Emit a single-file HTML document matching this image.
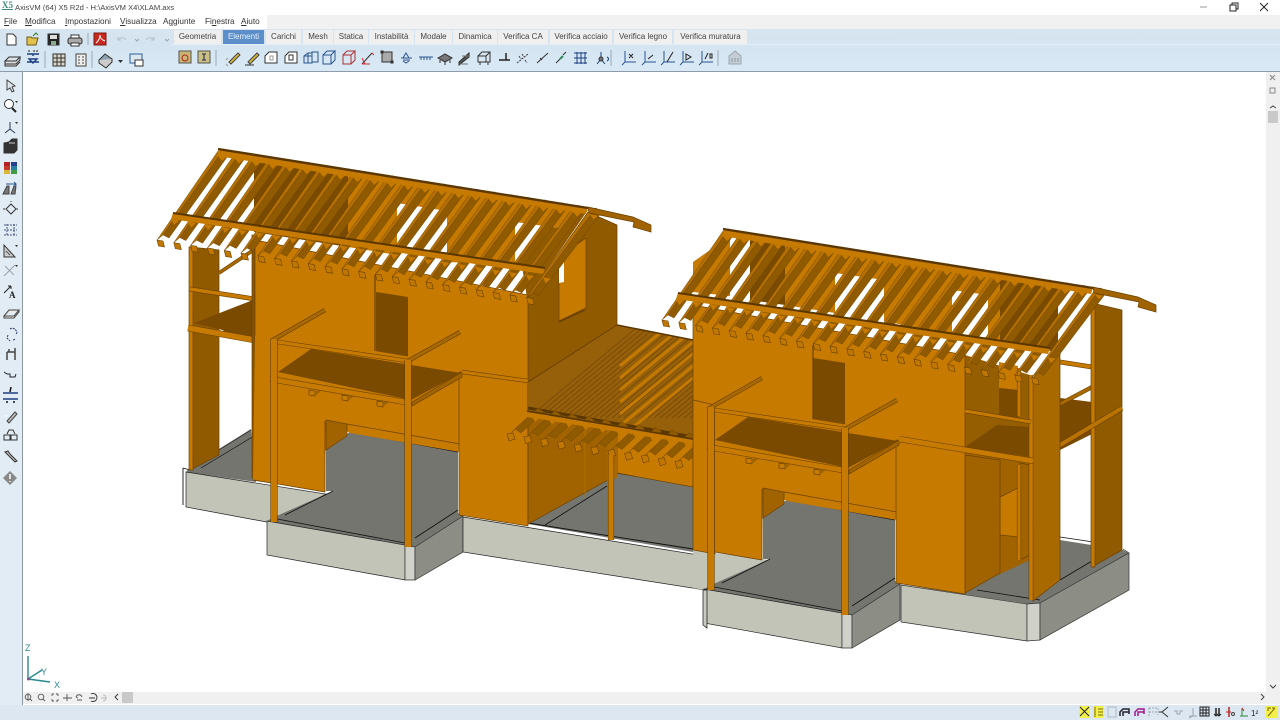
<!DOCTYPE html>
<html lang="it"><head><meta charset="utf-8"><title>AxisVM</title>
<style>
html,body{margin:0;padding:0;width:1280px;height:720px;overflow:hidden;background:#fff;font-family:"Liberation Sans",sans-serif;color:#333}
div{position:absolute}
.t{font-size:8.2px;line-height:14px;white-space:nowrap}
.tab{position:absolute;top:30px;height:14px;background:#efefef;font-size:8px;line-height:14px;text-align:center;color:#444;white-space:nowrap}
.on{background:#5c8fc9;color:#e8f0fa}
u{text-decoration:underline}
svg{position:absolute;left:0;top:0}
</style></head><body>
<div style="left:0;top:0;width:1280px;height:14px;background:#fff"></div>
<div style="left:267px;top:15px;width:1013px;height:14px;background:#f1f1f1"></div>
<div class="t" style="left:15px;top:1px;color:#444;font-size:7.6px">AxisVM (64) X5 R2d - H:\AxisVM X4\XLAM.axs</div>
<div style="left:2px;top:0;font:bold 9px/10px 'Liberation Serif',serif;color:#3d8a78;text-decoration:underline">X5</div>
<div class="t" style="left:4px;top:15px"><u>F</u>ile</div>
<div class="t" style="left:25px;top:15px"><u>M</u>odifica</div>
<div class="t" style="left:65px;top:15px"><u>I</u>mpostazioni</div>
<div class="t" style="left:120px;top:15px"><u>V</u>isualizza</div>
<div class="t" style="left:163px;top:15px">A<u>g</u>giunte</div>
<div class="t" style="left:205px;top:15px">Fi<u>n</u>estra</div>
<div class="t" style="left:241px;top:15px"><u>A</u>iuto</div>
<div style="left:0;top:29px;width:1280px;height:42px;background:linear-gradient(#d8e5f0,#d4e4f0 40%,#d9e9f5 100%)"></div>
<div style="left:0;top:71px;width:1280px;height:1px;background:#8e9ba8"></div>
<div style="left:172px;top:44px;width:1108px;height:1px;background:#e6eff6"></div>
<div style="left:0;top:72px;width:22px;height:633px;background:#e2ecf5"></div>
<div style="left:22px;top:72px;width:1px;height:633px;background:#8f99a3"></div>
<div style="left:23px;top:692px;width:1243px;height:12px;background:#f0f0f0"></div>
<div style="left:1266px;top:72px;width:14px;height:632px;background:#f0f0f0"></div>
<div style="left:122px;top:692px;width:11px;height:11px;background:#c9c9c9"></div>
<div style="left:1268px;top:111px;width:10px;height:12px;background:#c9c9c9"></div>
<div style="left:0;top:705px;width:1280px;height:15px;background:#dce7f1"></div>
<div style="left:1079px;top:706px;width:11px;height:12px;background:#f4f04a"></div>
<div style="left:1093px;top:706px;width:11px;height:12px;background:#f4f04a"></div>
<div style="left:1266px;top:706px;width:12px;height:12px;background:#f4f04a"></div>
<div class="tab" style="left:174px;width:47px">Geometria</div>
<div class="tab on" style="left:223px;width:41px">Elementi</div>
<div class="tab" style="left:266px;width:35px">Carichi</div>
<div class="tab" style="left:303px;width:30px">Mesh</div>
<div class="tab" style="left:334px;width:34px">Statica</div>
<div class="tab" style="left:369px;width:45px">Instabilità</div>
<div class="tab" style="left:415px;width:37px">Modale</div>
<div class="tab" style="left:453px;width:44px">Dinamica</div>
<div class="tab" style="left:498px;width:50px">Verifica CA</div>
<div class="tab" style="left:550px;width:62px">Verifica acciaio</div>
<div class="tab" style="left:614px;width:58px">Verifica legno</div>
<div class="tab" style="left:674px;width:73px">Verifica muratura</div>

<svg id="m" width="1280" height="720" viewBox="0 0 1280 720"></svg>

<svg width="1280" height="720" viewBox="0 0 1280 720" fill="none" stroke="#333" stroke-width="1">
<!-- window controls -->
<path d="M1200 7h7" stroke="#999"/><path d="M1230 5h6v6h-6zM1232 5v-2h6v6h-2" stroke="#222"/><path d="M1260 3l8 8M1268 3l-8 8" stroke="#222"/>
<!-- toolbar row 1 -->
<path d="M7 34h6l3 3v8H7z" fill="#fff"/>
<path d="M27 37h4l1 1h6l-2 7H27z" fill="#e2c24a" stroke="#6b5a1c"/><path d="M33 36l3-3 2 2" stroke="#2a7d2a"/>
<rect x="48" y="34" width="11" height="11" fill="#222"/><rect x="50" y="35" width="7" height="4" fill="#ddd" stroke="none"/><rect x="51" y="41" width="5" height="4" fill="#8a8" stroke="none"/>
<path d="M71 35h8v3h-8z" fill="#fff"/><rect x="68" y="38" width="14" height="6" rx="2" fill="#aaa"/><path d="M71 43h8v3h-8z" fill="#fff"/>
<path d="M88 33v12" stroke="#9aa8b4"/>
<rect x="94" y="33" width="12" height="12" fill="#c8281e" stroke="#7a1a14"/><path d="M96 43c3-2 4-6 4-8 0 3 2 5 5 6" stroke="#fff"/>
<path d="M118 40c2-3 6-3 8 0M118 37v3h3M146 40c2-3 6-3 8 0M154 37v3h-3" stroke="#b5bfc9"/><path d="M135 39l2 2 2-2M165 39l2 2 2-2" stroke="#9aa6b2"/>
<!-- toolbar row 2 -->
<path d="M5 61l4-4h11l-4 4zM5 61v3h11l4-4v-3M5 64v2h11l4-4" fill="#ddd"/>
<path d="M27 54h12M27 62h12M33 54v2M29 59h8l-4 4z" stroke="#1d3f80" stroke-width="1.4"/><path d="M28 51h2M33 51h2M36 51h2" stroke="#222"/>
<path d="M45 51v17M92 51v17" stroke="#9aa8b4"/>
<rect x="53" y="54" width="12" height="12" fill="#d9d6c4" stroke="#333"/><path d="M53 58h12M53 62h12M57 54v12M61 54v12" stroke="#333"/>
<rect x="76" y="54" width="10" height="12" fill="#eee" stroke="#444"/><path d="M78 57h2M78 60h2M78 63h2M82 57h2M82 60h2M82 63h2" stroke="#444"/>
<path d="M99 60l6-6 7 5-6 7z" fill="#8ba0b0" stroke="#333"/><path d="M99 60v3l7 5 6-6v-3" fill="#ccc" stroke="#333"/><path d="M118 60h5l-2.5 3z" fill="#333" stroke="none"/>
<rect x="130" y="54" width="12" height="9" fill="#dde7f0" stroke="#2d5f96"/><rect x="135" y="60" width="8" height="6" fill="#fff" stroke="#333"/>
<!-- group -->
<rect x="179" y="51" width="12" height="12" fill="#c9b673" stroke="#555"/><circle cx="185" cy="58" r="3" stroke="#b02020"/>
<rect x="198" y="51" width="12" height="12" fill="#c9c083" stroke="#555"/><path d="M204 54v6M202 54h4M202 60h4" stroke="#224"/>
<path d="M216 50v16" stroke="#9aa8b4"/>
<path d="M229 62l9-9 2 2-9 9z" fill="#d9b93a" stroke="#444"/><path d="M226 64l2 2M226 60l2-2" stroke="#999"/>
<path d="M248 62l9-9 2 2-9 9z" fill="#d9b93a" stroke="#444"/><path d="M245 65h9" stroke="#333"/>
<g stroke="#333"><path d="M265 56l4-4h8v11h-12z" fill="#fff"/><rect x="270" y="56" width="3" height="4" stroke="#999"/></g>
<path d="M285 56l4-4h8v11h-12z" fill="#fff"/><rect x="289" y="55" width="4" height="5" fill="#fff"/>
<path d="M304 56h8v7h-8zM312 52h6v10h-6zM304 56l4-3h4M308 53v10" stroke="#2b5690"/>
<path d="M323 55h8v9h-8zM331 55l4-4v9l-4 4M323 55l4-4h8" stroke="#2b5690"/>
<path d="M343 55h8v9h-8zM351 55l4-4v9l-4 4M343 55l4-4h8" stroke="#a33"/>
<path d="M362 64l10-11" stroke="#333"/><path d="M362 64h8M372 53l2 2M362 58l3 6" stroke="#c33"/>
<rect x="382" y="52" width="10" height="10" fill="#aaa" stroke="#333"/><rect x="381" y="51" width="2" height="2" fill="#333"/><rect x="391" y="61" width="2" height="2" fill="#333"/>
<path d="M401 58h11M403 60h7M406 53l-3 5h6zM403 61l3 2 3-2" stroke="#2b5690"/>
<path d="M419 57h14M421 57v3M424 57v3M427 57v3M430 57v3" stroke="#2b5690"/>
<path d="M438 58l7-4 7 4-7 4z" fill="#777" stroke="#333"/><path d="M440 60v3M445 62v3M450 60v3" stroke="#333"/>
<path d="M459 62l10-9v4l-10 8z" fill="#555" stroke="#333"/><path d="M462 56h8M460 64h8" stroke="#777"/>
<path d="M478 56l4-4h8v10h-12zM478 56h8v6M486 56l4-4M480 62v3M488 62v3" stroke="#333"/>
<path d="M499 60h11M506 53v7" stroke="#222" stroke-width="1.5"/>
<path d="M517 63l11-9M519 56l2 3M522 54l2 3M525 60l2 3" stroke="#444" stroke-dasharray="2 1"/>
<path d="M537 63l11-10" stroke="#333"/><path d="M540 58l2 2" stroke="#333"/>
<path d="M556 63l4-4M563 55l3-3" stroke="#333"/><path d="M560 59l3-3" stroke="#2e8b57" stroke-width="2"/>
<path d="M574 53h13M574 58h13M574 63h13M577 52v12M581 52v12M585 52v12" stroke="#1d3f80"/>
<path d="M601 52v7M597 64l4-5 4 5M607 57c2 1 2 3 0 4" stroke="#1d3f80"/><circle cx="601" cy="59" r="2" fill="#777"/>
<path d="M611 50v16" stroke="#9aa8b4"/>
<g stroke="#2b5690"><path d="M625 51v11h11M625 62l-3 3"/><path d="M645 51v11h11M645 62l-3 3"/><path d="M664 51v11h11M664 62l-3 3"/><path d="M683 51v11h11M683 62l-3 3"/><path d="M702 51v11h11M702 62l-3 3"/></g>
<path d="M629 54l4 4M633 54l-4 4M648 59l5-4M667 62l6-10M686 54v6l5-3zM705 59l3-6M710 54h2v4h-2z" stroke="#222"/>
<path d="M718 50v16" stroke="#9aa8b4"/>
<path d="M729 56l6-5 6 5v8h-12z" fill="#c5ced6" stroke="#9aa6b0"/><path d="M732 58v4M735 58v4M738 58v4" stroke="#8a96a0"/>
<!-- left toolbar -->
<path d="M7 80l8 6-3 1 2 4-2 1-2-4-3 2z" fill="#dfe6ee" stroke="#444"/>
<circle cx="9" cy="104" r="4.5" fill="#fff" stroke="#333"/><path d="M12 108l4 4" stroke="#222" stroke-width="2"/><path d="M15 101h3l-1.500 2z" fill="#333" stroke="none"/>
<path d="M10 122v7M10 129l-5 4M10 129l5 4" stroke="#2b3a55"/><path d="M15 122h3l-1.500 2z" fill="#333" stroke="none"/>
<path d="M4 143l5-1 3-3h5v11l-3 3H4z" fill="#333"/><path d="M9 143h6" stroke="#ccc"/>
<g stroke="none"><rect x="4" y="162" width="6" height="4" fill="#b52025"/><rect x="11" y="162" width="6" height="4" fill="#263f8f"/><rect x="4" y="166" width="6" height="4" fill="#c23b2a"/><rect x="11" y="166" width="6" height="4" fill="#2a7f9c"/><rect x="4" y="170" width="6" height="4" fill="#d8b636"/><rect x="11" y="170" width="6" height="4" fill="#3f9c44"/></g>
<path d="M3 194l4-8h2v8zM11 194l3-8h2l-1 8z" fill="#777" stroke="#444"/><path d="M6 184h10l-2-2M16 184l-2 2" stroke="#2b5690"/>
<path d="M11 204l5 5-5 5-5-5zM3 209h2M16 209h2M11 202v-1" stroke="#333"/>
<path d="M4 225h13M4 230h13M4 235h13M7 224v12M14 224v12" stroke="#4a5a80" stroke-dasharray="2 1"/>
<path d="M4 245v12h11z" fill="#ccc" stroke="#333"/><path d="M6 251l4 4" stroke="#555"/><path d="M15 245h3l-1.500 2z" fill="#333" stroke="none"/>
<path d="M4 276l11-11M5 266l9 9" stroke="#9aa2aa"/><path d="M15 265h3l-1.500 2z" fill="#333" stroke="none"/>
<path d="M4 293l7-7M11 286l-3 0M11 286v3" stroke="#222"/><text x="9" y="298" font-family="Liberation Serif,serif" font-weight="bold" font-size="9" fill="#222" stroke="none">A</text>
<path d="M4 316l5-6h10l-5 6zM4 316v2h10l5-6v-2" fill="#e8e8e8" stroke="#444"/>
<path d="M10 329l2-1 3 1 2 3-1 3M8 335l-1 3 3 3M13 340l3-1" stroke="#2b3a7a" stroke-dasharray="2 1"/>
<path d="M7 352h8v8M7 352v8M9 352v-3M15 348v4" stroke="#444" stroke-width="1.500"/>
<path d="M4 372l3 2h3v3h5l1-3" stroke="#223"/>
<path d="M3 393h15M3 399h15" stroke="#1d3f80" stroke-width="1.500"/><path d="M7 401v2M14 401v2M11 387l-1 5" stroke="#111" stroke-width="1.500"/>
<path d="M7 421l8-9 2 2-8 9z" fill="#bbb" stroke="#444"/><path d="M4 416h3" stroke="#fff"/>
<path d="M7 434l2-4h4l2 4" stroke="#333"/><rect x="4" y="435" width="6" height="5" stroke="#333"/><rect x="11" y="435" width="6" height="5" stroke="#333"/>
<path d="M5 452l3 3 7 7 2-1-7-7-2-3z" fill="#bbb" stroke="#333"/>
<path d="M10 471l7 7-7 7-7-7z" fill="#888" stroke="none"/><path d="M10 474v5M10 481v1" stroke="#fff" stroke-width="1.500"/>
<!-- axis -->
<g stroke="#2a8a8f" stroke-width="1.400"><path d="M28 656v23M28 679l22 3M28 679l14-9"/></g>
<circle cx="28.500" cy="679" r="1.500" fill="#8a4a8a" stroke="none"/>
<g font-family="Liberation Sans,sans-serif" font-size="9" fill="#2a8a8f" stroke="none"><text x="25" y="651">Z</text><text x="41" y="675">Y</text><text x="54" y="688">X</text></g>
<!-- bottom icons -->
<g stroke="#555" stroke-width=".9"><circle cx="28" cy="697" r="2.800"/><path d="M30 699l2 2M28 693v8"/><circle cx="41" cy="697" r="2.800"/><path d="M43 699l2 2"/><path d="M52 694h2M52 694v2M58 694h-2M58 694v2M52 701h2M52 701v-2M58 701h-2M58 701v-2"/><path d="M63 698h9M67 694v7"/><path d="M76 697c1-3 5-3 6 0M76 697l2 1M77 700h5"/><path d="M89 698h6M91 694a4 4 0 1 1 0 7" stroke="#333"/><path d="M101 698h6M103 695a3 3 0 1 1 0 6" stroke="#bbb"/><path d="M118 694l-3 3 3 3" stroke="#333"/></g>
<!-- scroll icons -->
<g stroke="#888"><path d="M1270 75l5 5M1275 75l-5 5"/><rect x="1270" y="88" width="5" height="5"/></g>
<path d="M1270 108l3-2 3 2M1270 685l3 3 3-3M1261 694l3 3-3 3" stroke="#444"/>
<!-- status icons -->
<path d="M1080 707l9 9M1089 707l-9 9" stroke="#222"/><path d="M1095 707v10M1098 709h5M1098 712h5M1098 715h5" stroke="#7a6a10"/>
<g stroke="#b0bac4"><rect x="1108" y="707" width="8" height="10"/></g>
<path d="M1120 716v-4l3-3h6v5M1123 716v-4h6" stroke="#223" stroke-width="1.500"/><path d="M1135 716v-4l3-3h6v5M1138 716v-4h6" stroke="#a01a90" stroke-width="1.500"/>
<path d="M1149 708h9v7M1149 708v8M1149 712h9" stroke="#a0aab4" stroke-dasharray="2 1"/>
<path d="M1168 707l-6 5 6 5M1162 712h-3" stroke="#333"/><path d="M1174 711h3v3h3v-3h3" stroke="#9aa6b2"/><path d="M1189 716h8M1193 708v8l-4 2" stroke="#9aa6b2"/>
<rect x="1200" y="707" width="9" height="9" stroke="#222"/><path d="M1200 710h9M1200 713h9M1203 707v9M1206 707v9" stroke="#222"/>
<path d="M1216 708v8M1219 708v8" stroke="#222" stroke-width="1.500"/><path d="M1214 714l2 2 2-2M1217 714l2 2 2-2" stroke="#222"/>
<path d="M1229 707v10" stroke="#b22" stroke-width="1.500"/><path d="M1226 712h5" stroke="#b22"/><circle cx="1233" cy="714" r="1.500" stroke="#444"/>
<path d="M1240 716h8M1242 716v-8" stroke="#2a8a3a"/><path d="M1242 708l2 3" stroke="#b22"/>
<text x="1251" y="716" font-family="Liberation Sans,sans-serif" font-size="8" fill="#222" stroke="none">1²</text>
<path d="M1268 716l7-8M1275 708h-3M1268 711v-3h3" stroke="#7a6a10"/>
</svg>

<script>
var h='',D='#6b4100',O='#c67a00',K='#7a4a00',M='#96600a',GR='#74756f',LT='#c3c4b8',SD='#8c8d84';
function P(a,f,s,w){h+='<polygon points="'+a.join(' ')+'" fill="'+f+'"'+(s?' stroke="'+s+'" stroke-width="'+(w||.7)+'"':'')+'/>';}
function L(a,b,c,d,s,w){h+='<line x1="'+a+'" y1="'+b+'" x2="'+c+'" y2="'+d+'" stroke="'+s+'" stroke-width="'+(w||.7)+'"/>';}
function B(a,b,c,d,w,col){L(a,b,c,d,D,w+1.2);L(a,b,c,d,col||O,w);}
function off(a,d,e){return a.map(function(p){return [p[0]+d,p[1]+e];});}

function foundation(d,e){
 var Q=function(a,f,s){P(off(a,d,e),f,s);};
 Q([[267,521],[405,545],[405,580],[267,555]],LT,'#222');
 Q([[405,545],[415,547],[415,580],[405,580]],'#d0d1c8','#333');
 Q([[415,547],[463,516],[463,552],[415,580]],SD,'#333');
}
function floor(d,e){
 P(off([[326,447],[350,432],[458,450],[458,513],[463,516],[415,547],[405,545],[267,521],[272,518],[333,491],[326,491]],d,e),GR);
 var a=off([[272,518],[405,543]],d,e);L(a[0][0],a[0][1],a[1][0],a[1][1],'#111',.8);
 a=off([[285,515],[333,491]],d,e);L(a[0][0],a[0][1],a[1][0],a[1][1],'#111',.8);
 a=off([[415,538],[458,510]],d,e);L(a[0][0],a[0][1],a[1][0],a[1][1],'#111',.8);
 a=off([[350,432],[458,452]],d,e);L(a[0][0],a[0][1],a[1][0],a[1][1],'#111',.8);
}
function lower(d,e){
 var Q=function(a,f,s){P(off(a,d,e),f,s);};
 Q([[278,335],[460,365],[460,452],[350,433],[326,421],[325,492],[278,484]],O);
 L(278+d,484+e,325+d,492+e,D,.8);L(325+d,421+e,325+d,492+e,D,.8);
 Q([[326,420],[347,424],[347,436],[326,450]],'#a06300',D);
 var a=off([[347,424],[460,444]],d,e);L(a[0][0],a[0][1],a[1][0],a[1][1],D,.7);
 Q([[459,372],[528,382],[528,526],[459,515]],O,D);
}
function balcony(d,e){
 var Q=function(a,f,s){P(off(a,d,e),f,s);};
 var b=function(a,c,f,g,w,col){B(a+d,c+e,f+d,g+e,w,col);};
 Q([[278,372],[311,349],[461,373],[411,400]],K);
 Q([[412,402],[462,372],[462,377],[412,406]],'#a06300',D);
 [[312,390],[345,395],[380,401]].forEach(function(p){Q([[p[0]-3,p[1]],[p[0]+3,p[1]+1],[p[0]+3,p[1]+6],[p[0]-3,p[1]+5]],O,D);Q([[p[0]+3,p[1]+1],[p[0]+10,p[1]],[p[0]+3,p[1]+6]],'#a06300');});
 b(462,372,528,381,3,O);
 b(271,341,408,361,3.2);
 b(271,341,325,310,3,'#a86a00');
 b(408,361,460,332,3,'#a86a00');
 b(270,379,411,403,5);
 b(274,339,274,522,6);b(408,360,408,547,6);
}
function roof(d,e,n){
 var i,ux,uy,lx,ly;
 for(i=0;i<n;i++){
  ux=218+d+16.9*i;uy=151+e+2.68*i;lx=157+d+16.8*i;ly=240+e+2.62*i;
  P([[lx,ly],[lx+6,ly-5],[ux+6,uy-2],[ux,uy]],'#b36f00',D,.4);
  P([[lx+6,ly-5],[lx+12,ly-2],[ux+12,uy+2],[ux+6,uy-2]],'#8f5a00',D,.4);
  P([[lx,ly],[lx+6,ly+1],[lx+7.5,ly+7],[lx+1.5,ly+6]],'#c07700',D,.6);
 }
 P(off([[173,213],[545,268],[543,274],[171,219]],d,e),'#c67a00');
 P(off([[219,150],[588,208],[586,214],[217,156]],d,e),'#c67a00');
 for(i=0;i<n;i++){
  ux=175+d+16.9*i;uy=216+e+2.65*i;
  P([[ux-4,uy+3],[ux+4,uy+4.5],[ux-1,uy+9]],'#c67a00');
  ux=222+d+16.9*i;uy=153+e+2.65*i;
  P([[ux-4,uy+3],[ux+4,uy+4.5],[ux,uy+8]],'#c67a00');
 }
 var a=off([[173,213],[545,268],[218,149],[588,208]],d,e);
 L(a[0][0],a[0][1],a[1][0],a[1][1],'#5a3700',2);
 L(a[2][0],a[2][1],a[3][0],a[3][1],'#5a3700',2.4);
 P(off([[588,207],[633,217],[651,225],[651,232],[633,227],[634,222],[589,213]],d,e),'#a06300',D);
}

/* === foundations === */
P([[190,467],[251,429],[256,482],[186,472]],GR);
L(190,468,251,430,'#222',.7);L(201,468,254,436,'#111',.7);
P([[186,472],[326,494],[272,523],[186,507]],LT,'#222');
L(183,468,183,505,'#111',.9);L(183,468,190,470,'#111',.7);
floor(0,0);foundation(0,0);
P([[463,517],[705,556],[705,590],[463,552]],LT,'#222');
/* middle floor */
P([[528,523],[607,478],[617,473],[693,487],[693,552],[528,524]],GR);
L(545,525,607,486,'#111',.8);L(617,473,693,486,'#111',.9);L(528,523,693,549,'#111',.9);
/* light face left of 2nd piece (right building) */
P([[693,550],[770,560],[709,586],[705,590],[693,588]],LT);
/* right foundation */
floor(437,68);
P([[901,585],[1027,604],[1027,641],[901,622]],LT,'#222');
P([[965,593],[1000,573],[1000,535],[1060,540],[1123,550],[1129,553],[1040,603],[1027,604],[901,585]],GR);
L(977,590,1040,600,'#111',.8);L(1060,537,1100,543,'#111',.8);L(1060,580,1092,561,'#111',.8);
P([[1027,604],[1040,603],[1040,640],[1027,641]],'#d0d1c8','#333');
P([[1040,603],[1129,553],[1129,590],[1040,640]],SD,'#333');
L(1123,549,1129,553,'#333',.7);
foundation(437,68);
P([[703,590],[707,590],[707,628],[703,625]],'#c9cac0','#111');

/* === LEFT BUILDING === */
P([[527,298],[588,212],[617,225],[617,325],[528,382]],'#8f5a00',D);
P([[559,257],[586,238],[586,308],[559,321]],O,D);
P([[559,257],[564,254],[564,282],[559,283]],'#fff');
L(585,310,559,322,D,1.5);
P([[190,247],[219,250],[219,455],[190,470]],'#8f5a00',D);
P([[189,247],[193,247],[193,470],[189,470]],O,D);
P([[219,335],[253,300],[255,335]],K);
P([[194,323],[253,300],[255,338]],K);
B(190,289,255,299,3.5);
B(188,328,255,340,5.5);
B(219,273,252,251,2.5,'#a86a00');
/* main wall */
P([[252,235],[255,235],[255,480],[252,478]],'#875400',D);
P([[255,240],[528,295],[528,385],[255,340]],O,D);
P([[255,335],[278,338],[278,484],[253,480]],O);
L(253,480,278,484,D,.8);
P([[376,292],[408,297],[408,358],[376,353]],K);
L(375,275,375,353,D,1.2);
lower(0,0);
balcony(0,0);
L(528,384,528,524,D,.8);

/* === MIDDLE === */
P([[528,412],[617,430],[608,480],[528,524]],'#a06300',D);
P([[617,425],[693,440],[693,487],[617,473]],O,D);
P([[607,430],[617,430],[617,478],[607,481]],'#a86a00');
L(585,430,585,497,'#b47200',.8);
h+='<clipPath id="mc"><polygon points="528,382 617,325 693,340 693,441 528,412"/></clipPath><g clip-path="url(#mc)">';
P([[528,382],[617,325],[693,340],[693,441],[528,412]],'#96600a');
for(var k=0;k<40;k++){var x=528+k*6;L(x,418,x+130,310,'#6b4208',.6);}
for(k=0;k<7;k++){var yy=366+k*12;L(620,yy,700,yy-66,'#c47a00',3);}
h+='</g>';
L(528,382,617,325,D,1);L(617,325,693,340,'#5a3700',1.5);
L(528,408,693,437,'#5a3700',3);
for(k=0;k<11;k++){var lx=510+k*16.8,ly=434+k*2.75,ux=lx+23,uy=ly-21;
 P([[lx,ly],[lx+5,ly-5],[ux+5,uy-5],[ux,uy]],'#b36f00',D,.4);
 P([[lx+5,ly-5],[lx+11,ly-1],[ux+11,uy-1],[ux+5,uy-5]],'#8f5a00',D,.4);
 P([[lx-3,ly],[lx+3,ly-1],[lx+5,ly+5],[lx-1,ly+7]],'#c07700',D,.6);
}
P([[527,412],[693,440],[693,444],[527,417]],O);
for(k=0;k<10;k++){var a1=535+k*16.8,b1=415+k*2.75;P([[a1-4,b1],[a1+5,b1+2],[a1,b1+7]],O);}
L(527,411,693,439,'#5a3700',1.5);
B(611,455,611,540,5);

/* === RIGHT BUILDING === */
P([[1060,398],[1092,402],[1092,434],[1060,450]],K);
B(1060,362,1092,367,3.5);
B(1060,404,1094,386,3,'#a86a00');
P([[1092,303],[1122,310],[1122,550],[1092,567]],'#8f5a00',D);
P([[1091,303],[1095,303],[1095,567],[1091,567]],O,D);
B(1030,463,1122,408,4,'#b87300');
P([[965,355],[1030,375],[1030,462],[965,452]],'#955e00');
P([[999,362],[1018,366],[1018,390],[999,388]],O);
P([[999,388],[1018,390],[1018,418],[999,415]],K);
P([[965,447],[997,425],[1030,427],[1030,457]],K);
B(1019,368,1019,416,3);
P([[965,452],[1030,462],[1030,560],[1000,574],[965,592]],'#a06300');
P([[1000,497],[1020,487],[1020,537],[1000,535]],O,D);
P([[1020,463],[1030,465],[1030,555],[1020,560]],'#a06300',D);
B(1019,465,1019,560,3);
P([[965,455],[1000,460],[1000,573],[965,593]],'#a06300',D);
P([[1032,380],[1060,340],[1060,580],[1033,601]],'#a86a00',D);
B(1031,375,1031,600,3.5);
P([[693,305],[965,355],[965,452],[693,407]],O,D);
P([[693,400],[715,405],[715,554],[693,550]],O,D);
P([[813,358],[845,363],[845,428],[813,423]],K);
L(813,345,813,423,D,1.2);
lower(437,68);
balcony(437,68);
B(965,411,1031,422,3);
B(899,439,1033,461,5);

/* === ROOFS === */
P([[218,150],[254,158],[254,235],[172,214]],'#fff');
P([[254,156],[348,171],[348,247],[254,232]],K);
P([[348,171],[397,180],[397,255],[348,247]],O);
P([[397,203],[447,211],[447,262],[397,254]],'#fff');
P([[397,180],[515,200],[515,265],[447,262],[447,211],[397,203]],O);
P([[515,200],[588,208],[556,228],[515,222]],O);
P([[556,228],[588,210],[527,298],[522,266],[552,227]],'#8f5a00');
P([[515,222],[552,227],[522,266],[515,262]],'#fff');
roof(0,0,23);
P([[723,231],[693,290],[677,293],[693,262]],'#fff');
P([[693,262],[730,236],[730,296],[693,292]],O);
P([[730,267],[750,270],[750,300],[730,297]],'#fff');
P([[750,240],[785,245],[785,305],[750,300]],K);
P([[785,245],[835,252],[835,313],[785,305]],O);
P([[835,273],[884,280],[884,321],[835,313]],'#fff');
P([[835,252],[952,270],[952,335],[884,321],[884,280],[835,273]],O);
P([[952,290],[988,295],[988,341],[952,335]],'#fff');
P([[952,270],[1000,278],[1000,343],[988,341],[988,295],[952,290]],O);
P([[1000,278],[1058,288],[1058,352],[1000,343]],K);
P([[1058,300],[1085,300],[1060,345],[1058,345]],'#fff');
roof(505,80,23);
document.getElementById('m').innerHTML=h;
</script>
</body></html>
